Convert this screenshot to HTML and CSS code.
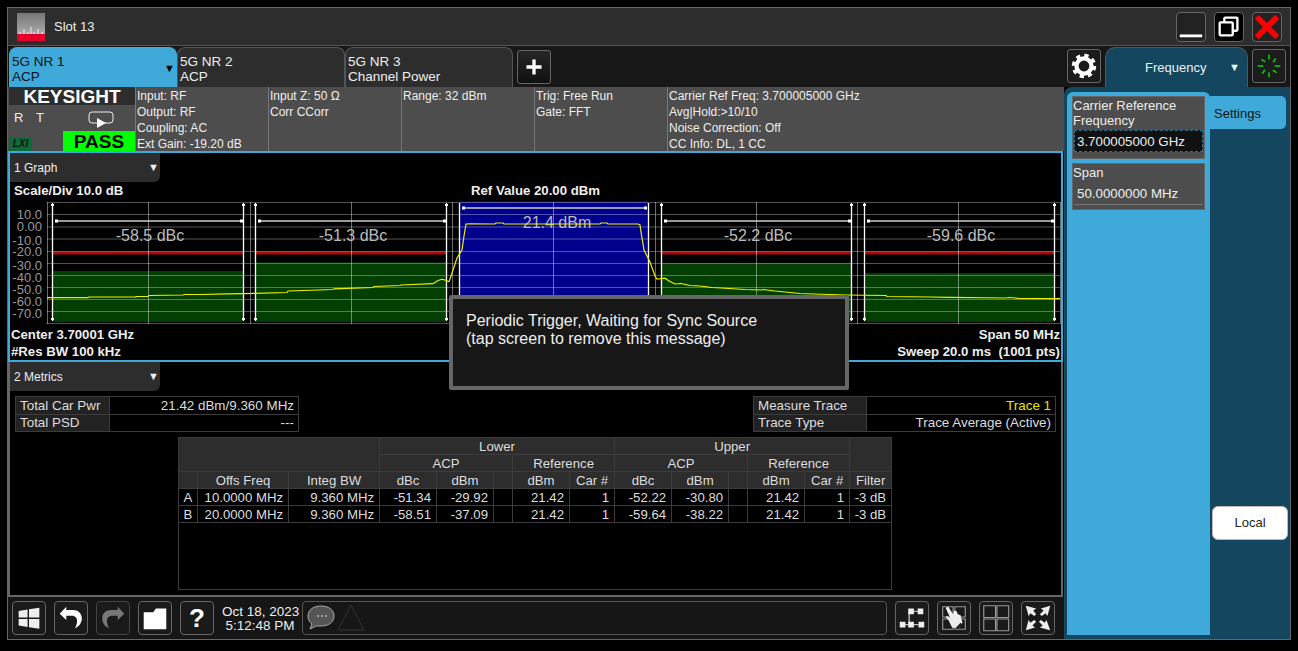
FILE: index.html
```html
<!DOCTYPE html>
<html lang="en">
<head>
    <meta charset="UTF-8">
    <title>Slot 13 - 5G NR ACP</title>
    <link rel="stylesheet" href="styles.css">
</head>
<body>
<div class="window">

    <!-- Title bar -->
    <header class="titlebar">
        <svg class="app-logo" viewBox="0 0 28 28">
            <defs>
                <linearGradient id="logoGrey" x1="0" y1="0" x2="0" y2="1">
                    <stop offset="0" stop-color="#777"/>
                    <stop offset="1" stop-color="#aaa"/>
                </linearGradient>
            </defs>
            <rect width="28" height="21" fill="url(#logoGrey)"/>
            <rect y="21" width="28" height="7" fill="#e4002b"/>
            <path d="M3 21v-2M7 21v-5M11 21v-2M14 21v-7M17 21v-2M21 21v-5M25 21v-2" stroke="#eee" stroke-width="1"/>
        </svg>
        <span class="app-title">Slot 13</span>
        <div class="win-btns">
            <button class="win-btn">
                <svg viewBox="0 0 30 30"><rect x="3" y="23" width="24" height="3" fill="#fff"/></svg>
            </button>
            <button class="win-btn win-btn-dark">
                <svg viewBox="0 0 30 30">
                    <rect x="10" y="5" width="14" height="14" rx="1" fill="none" stroke="#fff" stroke-width="2.5"/>
                    <rect x="5" y="10" width="14" height="14" rx="1" fill="#000" stroke="#fff" stroke-width="2.5"/>
                </svg>
            </button>
            <button class="win-btn">
                <svg viewBox="0 0 30 30"><path d="M4 4 26 26M26 4 4 26" stroke="#f00" stroke-width="6"/></svg>
            </button>
        </div>
    </header>

    <!-- Tabs -->
    <nav class="tabbar">
        <div class="tab tab-active">5G NR 1<br>ACP<span class="tab-arrow">&#9660;</span></div>
        <div class="tab">5G NR 2<br>ACP</div>
        <div class="tab">5G NR 3<br>Channel Power</div>
        <button class="add-btn">
            <svg viewBox="0 0 34 34"><path d="M17 9v16M9 17h16" stroke="#fff" stroke-width="3.5"/></svg>
        </button>
        <button class="gear-btn">
            <svg viewBox="0 0 34 34">
                <circle cx="17" cy="17" r="10.5" fill="none" stroke="#fff" stroke-width="5" stroke-dasharray="4.2 4.05"/>
                <circle cx="17" cy="17" r="8" fill="none" stroke="#fff" stroke-width="4.5"/>
            </svg>
        </button>
        <div class="freq-tab">Frequency<span class="freq-arrow">&#9660;</span></div>
        <button class="spin-btn">
            <svg viewBox="0 0 34 34">
                <path d="M17 5v5M17 24v5M5 17h6M23 17h6M9 10l4 2.500M21 21.500l4 2.500M24 9l-2.500 4M12.500 21l-2.500 4" stroke="#0d0" stroke-width="1.600"/>
            </svg>
        </button>
    </nav>

    <div class="content">
        <div class="main">

            <!-- Instrument status -->
            <section class="status">
                <div class="brand">
                    <div class="brand-name">KEYSIGHT</div>
                    <div class="brand-row">
                        <span class="rt">R</span><span class="rt">T</span>
                        <svg class="run-icon" viewBox="0 0 26 18">
                            <rect x="1" y="1" width="24" height="11" rx="3" fill="none" stroke="#eee" stroke-width="1"/>
                            <path d="M9 7 18 12 9 17z" fill="#fff"/>
                        </svg>
                    </div>
                    <div class="brand-foot">
                        <span class="lxi">LXI</span>
                        <span class="pass">PASS</span>
                    </div>
                </div>
                <div class="status-cell">Input: RF<br>Output: RF<br>Coupling: AC<br>Ext Gain: -19.20 dB</div>
                <div class="status-cell">Input Z: 50 &Omega;<br>Corr CCorr</div>
                <div class="status-cell">Range: 32 dBm</div>
                <div class="status-cell">Trig: Free Run<br>Gate: FFT</div>
                <div class="status-cell status-wide">Carrier Ref Freq: 3.700005000 GHz<br>Avg|Hold:&gt;10/10<br>Noise Correction: Off<br>CC Info: DL, 1 CC</div>
            </section>

            <!-- Graph window -->
            <section class="graph">
                <div class="dropdown">1 Graph<span class="drop-arrow">&#9660;</span></div>
                <div class="graph-head">
                    <span>Scale/Div 10.0 dB</span>
                    <span>Ref Value 20.00 dBm</span>
                    <span></span>
                </div>
                <svg class="plot" viewBox="10 199 1051 127">
                    <!-- channel fills -->
                    <rect x="53" y="271" width="190" height="51" fill="#033f03"/>
                    <rect x="255" y="262.500" width="191" height="59.500" fill="#033f03"/>
                    <rect x="661" y="263" width="190" height="59" fill="#033f03"/>
                    <rect x="864" y="273" width="190" height="49" fill="#033f03"/>
                    <rect x="459" y="201" width="189" height="123" fill="#00008c"/>
                    <!-- limit line -->
                    <path d="M53 253H243M255 253H446M661 253H851M864 253H1054" stroke="#a80a0a" stroke-width="3"/>
                    <!-- graticule -->
                    <path d="M47 202.500H1060M47 214.500H1060M47 227H1060M47 239H1060M47 251.500H1060M47 263.500H1060M47 275.500H1060M47 287.500H1060M47 299.500H1060M47 311.500H1060M47 323.500H1060" stroke="#fff" stroke-opacity=".32" stroke-width="1"/>
                    <path d="M47.500 202V324M148.500 202V324M250.500 202V324M351.500 202V324M452.500 202V324M553.500 202V324M655.500 202V324M756.500 202V324M857.500 202V324M958.500 202V324M1060.500 202V324" stroke="#fff" stroke-opacity=".42" stroke-width="1"/>
                    <!-- y axis -->
                    <g class="y-axis">
                        <text x="42" y="219">10.0</text>
                        <text x="42" y="231">0.00</text>
                        <text x="42" y="245">-10.0</text>
                        <text x="42" y="256">-20.0</text>
                        <text x="42" y="270">-30.0</text>
                        <text x="42" y="282">-40.0</text>
                        <text x="42" y="294">-50.0</text>
                        <text x="42" y="306">-60.0</text>
                        <text x="42" y="318">-70.0</text>
                    </g>
                    <!-- channel markers -->
                    <path d="M52.500 203V321M243.500 203V321M255.500 203V321M446.500 203V321M459.500 203V321M648.500 203V321M661.500 203V321M851.500 203V321M864.500 203V321M1054.500 203V321" stroke="#fff" stroke-width="1.300"/>
                    <path d="M51 204h3v2h-3zM51 318h3v2h-3zM242 204h3v2h-3zM242 318h3v2h-3zM254 204h3v2h-3zM254 318h3v2h-3zM445 204h3v2h-3zM445 318h3v2h-3zM660 204h3v2h-3zM660 318h3v2h-3zM850 204h3v2h-3zM850 318h3v2h-3zM863 204h3v2h-3zM863 318h3v2h-3zM1053 204h3v2h-3zM1053 318h3v2h-3z" fill="#fff"/>
                    <path d="M56 221H241M258 221H444M463 208H646M664 221H849M867 221H1052" stroke="#ccc" stroke-width="1.500"/>
                    <path d="M55 219.500h3v3h-3zM240 219.500h3v3h-3zM258 219.500h3v3h-3zM443 219.500h3v3h-3zM462 206.500h3v3h-3zM644 206.500h3v3h-3zM664 219.500h3v3h-3zM848 219.500h3v3h-3zM867 219.500h3v3h-3zM1051 219.500h3v3h-3z" fill="#fff"/>
                    <!-- band power -->
                    <g class="band-text">
                        <text x="150" y="241">-58.5 dBc</text>
                        <text x="353" y="241">-51.3 dBc</text>
                        <text x="557" y="228">21.4 dBm</text>
                        <text x="758" y="241">-52.2 dBc</text>
                        <text x="961" y="241">-59.6 dBc</text>
                    </g>
                    <!-- trace -->
                    <polyline class="trace" points="47,297.700 88,297.700 89,297 136,297 136,296.500 148,296.500 149,295.500 183,295 184,294.500 200,294.500 228,293.800 243,293.700 287,292.500 288,291 333,289.500 334,288.800 373,287.500 374,286.500 400,285.500 401,285 433,283.700 438,280.500 442,279.300 445,280 449,281.700 452,273 457,258 462,250 464,236 466,224 470,223.800 495,224 496,223 503,223 504,224 600,224 601,223 607,223 608,224 638,224 640,225 641,232 644,250 650,262 655,276 657,279 662,278.500 665,278.200 669,281 675,284 681,283.500 690,285.500 700,286 712,287.500 721,288 745,289.500 761,290 763,289.500 775,291 800,293.500 845,295 886,295.500 887,296.500 930,297 950,297.300 1005,298 1010,297.500 1020,298.500 1060,298.700"/>
                </svg>
                <div class="graph-foot">
                    <span>Center 3.70001 GHz</span>
                    <span>Span 50 MHz</span>
                </div>
                <div class="graph-foot">
                    <span>#Res BW 100 kHz</span>
                    <span>Sweep 20.0 ms &nbsp;(1001 pts)</span>
                </div>
            </section>

            <!-- Metrics window -->
            <section class="metrics">
                <div class="dropdown">2 Metrics<span class="drop-arrow">&#9660;</span></div>
                <div class="summary-row">
                    <table class="summary summary-left">
                        <tr><th>Total Car Pwr</th><td>21.42 dBm/9.360 MHz</td></tr>
                        <tr><th>Total PSD</th><td>---</td></tr>
                    </table>
                    <table class="summary summary-right">
                        <tr><th>Measure Trace</th><td class="yellow">Trace 1</td></tr>
                        <tr><th>Trace Type</th><td>Trace Average (Active)</td></tr>
                    </table>
                </div>
                <table class="acp">
                    <colgroup>
                        <col class="c19"><col class="c91"><col class="c91">
                        <col class="c57"><col class="c57"><col class="c19"><col class="c57"><col class="c45">
                        <col class="c57"><col class="c57"><col class="c19"><col class="c57"><col class="c45">
                        <col class="c42">
                    </colgroup>
                    <thead>
                        <tr>
                            <th colspan="3" rowspan="2"></th>
                            <th colspan="5">Lower</th>
                            <th colspan="5">Upper</th>
                            <th rowspan="2"></th>
                        </tr>
                        <tr>
                            <th colspan="3">ACP</th>
                            <th colspan="2">Reference</th>
                            <th colspan="3">ACP</th>
                            <th colspan="2">Reference</th>
                        </tr>
                        <tr>
                            <th></th><th>Offs Freq</th><th>Integ BW</th>
                            <th>dBc</th><th>dBm</th><th></th><th>dBm</th><th>Car #</th>
                            <th>dBc</th><th>dBm</th><th></th><th>dBm</th><th>Car #</th>
                            <th>Filter</th>
                        </tr>
                    </thead>
                    <tbody>
                        <tr>
                            <td class="mid">A</td><td>10.0000 MHz</td><td>9.360 MHz</td>
                            <td>-51.34</td><td>-29.92</td><td></td><td>21.42</td><td>1</td>
                            <td>-52.22</td><td>-30.80</td><td></td><td>21.42</td><td>1</td>
                            <td>-3 dB</td>
                        </tr>
                        <tr>
                            <td class="mid">B</td><td>20.0000 MHz</td><td>9.360 MHz</td>
                            <td>-58.51</td><td>-37.09</td><td></td><td>21.42</td><td>1</td>
                            <td>-59.64</td><td>-38.22</td><td></td><td>21.42</td><td>1</td>
                            <td>-3 dB</td>
                        </tr>
                        <tr class="acp-empty"><td colspan="14"></td></tr>
                    </tbody>
                </table>
            </section>

            <!-- Bottom toolbar -->
            <footer class="toolbar">
                <button class="tool-btn">
                    <svg viewBox="0 0 34 34"><path d="M6 9.500 15.500 8v8.500H6zM17 7.700 28 6v10.500H17zM6 18h9.500v8.500L6 25zM17 18h11v10.500l-11-1.700z" fill="#eee"/></svg>
                </button>
                <button class="tool-btn">
                    <svg viewBox="0 0 34 34"><path d="M12 5 5 12.500l7 6.500v-4.500h6c3.500 0 5.500 2.500 5.500 5.500 0 3-1 6-2.500 8 5-2 7.500-6.500 7.500-10.500 0-5.500-4-9-9.500-9H12z" fill="#fff"/></svg>
                </button>
                <button class="tool-btn tool-btn-dim">
                    <svg viewBox="0 0 34 34"><path transform="matrix(-1 0 0 1 34 0)" d="M12 5 5 12.500l7 6.500v-4.500h6c3.500 0 5.500 2.500 5.500 5.500 0 3-1 6-2.500 8 5-2 7.500-6.500 7.500-10.500 0-5.500-4-9-9.500-9H12z" fill="#777"/></svg>
                </button>
                <button class="tool-btn">
                    <svg viewBox="0 0 34 34"><path d="M5 11h10l3-4h11v22H5z" fill="#fff"/></svg>
                </button>
                <button class="tool-btn tool-help">?</button>
                <div class="clock">Oct 18, 2023<br>5:12:48 PM</div>
                <div class="msg-box">
                    <svg class="msg-icon" viewBox="0 0 64 32">
                        <path d="M15 4c8 0 13 4 13 10s-5 10-13 10c-2 0-3 0-5 0l-6 3 2-5c-3-2-4-5-4-8C2 8 7 4 15 4z" fill="#555" stroke="#aaa" stroke-width="1"/>
                        <path d="M11 14h2M15 14h2M19 14h2" stroke="#eee" stroke-width="1.200"/>
                        <path d="M45 3 58 28H32z" fill="none" stroke="#333" stroke-width="1"/>
                    </svg>
                </div>
                <button class="tool-btn">
                    <svg viewBox="0 0 34 34">
                        <path d="M23 10H14V24M5 24H29" stroke="#bbb" stroke-width="1.500" fill="none"/>
                        <path d="M13 7h6v6h-6zM23 7h6v6h-6zM4 21h6v6H4zM13 21h6v6h-6zM24 21h6v6h-6z" fill="#eee"/>
                    </svg>
                </button>
                <button class="tool-btn">
                    <svg viewBox="0 0 34 34">
                        <path d="M5 5h11v11H5zM18 5h11v11H18zM5 18h11v11H5zM18 18h11v11H18z" fill="none" stroke="#999" stroke-width="1.200"/>
                        <path d="M8 6l3-1 5 8 1-4 3 1 1 3 3 1 2 8-4 6-7-1-4-8-3-3 2-1 3 2z" fill="#eee"/>
                        <path d="M19 27l5-5 2 2-5 5z" fill="#222"/>
                    </svg>
                </button>
                <button class="tool-btn">
                    <svg viewBox="0 0 34 34">
                        <path d="M4 4h12.500v12.500H4zM18 4h12.500v12.500H18zM4 18h12.500v12.500H4zM18 18h12.500v12.500H18z" fill="none" stroke="#999" stroke-width="1.200"/>
                    </svg>
                </button>
                <button class="tool-btn">
                    <svg viewBox="0 0 34 34">
                        <path d="M4 4l11 3-3 2 3 4-2 2-4-3-2 3zM30 4l-3 11-2-3-4 3-2-2 4-4-3-2zM4 30l3-11 2 3 4-3 2 2-4 4 3 2zM30 30l-11-3 3-2-4-4 2-2 4 3 2-3z" fill="#eee"/>
                    </svg>
                </button>
            </footer>
        </div>

        <!-- Softkey panel -->
        <aside class="panel">
            <div class="softkeys">
                <div class="softkey softkey-tall">
                    <div class="softkey-label">Carrier Reference<br>Frequency</div>
                    <div class="softkey-input">3.700005000 GHz</div>
                </div>
                <div class="softkey">
                    <div class="softkey-label">Span</div>
                    <div class="softkey-value">50.0000000 MHz</div>
                </div>
            </div>
            <div class="side">
                <div class="side-tab">Settings</div>
                <button class="local-btn">Local</button>
            </div>
        </aside>
    </div>

    <!-- Message over the graph -->
    <div class="popup">Periodic Trigger, Waiting for Sync Source<br>(tap screen to remove this message)</div>
</div>
</body>
</html>
```

FILE: styles.css
```css
/* Reset and Basic Styles */
* {
    margin: 0;
    padding: 0;
    box-sizing: border-box;
}
body {
    font-family: "Liberation Sans", Arial, sans-serif;
    background-color: #000;
    color: #eee;
    height: 651px;
    overflow: hidden;
}
button {
    font-family: inherit;
}
svg {
    display: block;
}

.window {
    position: relative;
    display: flex;
    flex-direction: column;
    width: 1284px;
    height: 633px;
    margin: 7px 0 0 7px;
    border: 1px solid #666;
}

/* Title bar */
.titlebar {
    display: flex;
    align-items: center;
    height: 38px;
    padding-left: 9px;
    background-color: #2d2d2d;
    border-bottom: 1px solid #555;
}
.app-logo {
    width: 28px;
    height: 28px;
}
.app-title {
    margin-left: 9px;
    font-size: 13px;
    color: #eee;
}
.win-btns {
    display: flex;
    gap: 8px;
    margin-left: auto;
    margin-right: 8px;
}
.win-btn {
    width: 30px;
    height: 30px;
    background-color: #222;
    border: 1px solid #666;
    border-radius: 4px;
    overflow: hidden;
}
.win-btn-dark {
    background-color: #000;
}

/* Tabs */
.tabbar {
    display: flex;
    align-items: flex-end;
    height: 41px;
    padding-left: 1px;
    background-color: #171717;
}
.tab {
    position: relative;
    width: 168px;
    height: 40px;
    padding: 6px 2px 0;
    font-size: 13.500px;
    line-height: 15px;
    background-color: #2d2d2d;
    border: 1px solid #555;
    border-bottom: none;
    border-radius: 8px 8px 0 0;
    color: #eee;
}
.tab-active {
    background-color: #3fa9da;
    border-color: #3fa9da;
    color: #111;
}
.tab-arrow {
    position: absolute;
    right: 1px;
    top: 13px;
    font-size: 11px;
    color: #000;
}
.add-btn {
    width: 34px;
    height: 34px;
    margin: 0 0 3px 4px;
    background: linear-gradient(#262626, #111);
    border: 1px solid #666;
    border-radius: 3px;
}
.gear-btn {
    width: 34px;
    height: 34px;
    margin: 0 4px 4px auto;
    background-color: #1c1c1c;
    border: 1px solid #666;
    border-radius: 3px;
}
.freq-tab {
    position: relative;
    width: 143px;
    height: 40px;
    padding: 12px 0 0 39px;
    font-size: 13px;
    color: #eee;
    background-color: #14475f;
    border: 1px solid #555;
    border-bottom: none;
    border-radius: 10px 10px 0 0;
}
.freq-arrow {
    position: absolute;
    right: 7px;
    top: 13px;
    font-size: 11px;
    color: #eee;
}
.spin-btn {
    width: 34px;
    height: 34px;
    margin: 0 4px 4px 4px;
    background-color: #1c1c1c;
    border: 1px solid #666;
    border-radius: 3px;
}

.content {
    display: flex;
    flex: 1;
    min-height: 0;
}
.main {
    display: flex;
    flex-direction: column;
    width: 1056px;
}

/* Status row */
.status {
    display: flex;
    flex: none;
    height: 64px;
    background-color: #4d4d4d;
    font-size: 12px;
    line-height: 16px;
    color: #eee;
}
.brand {
    width: 127px;
    background-color: #4d4d4d;
}
.brand-name {
    height: 18px;
    margin-left: 1px;
    margin-bottom: 1px;
    font-size: 19px;
    font-weight: bold;
    line-height: 20px;
    text-align: center;
    color: #fff;
    background-color: #2d2d2d;
}
.brand-row {
    display: flex;
    height: 25px;
    padding: 4px 0 0 6px;
    font-size: 13px;
}
.rt {
    width: 22px;
}
.run-icon {
    width: 26px;
    height: 18px;
    margin: 1px 0 0 30px;
}
.brand-foot {
    display: flex;
    justify-content: space-between;
    align-items: flex-end;
    height: 20px;
    margin-left: 1px;
}
.lxi {
    width: 23px;
    height: 14px;
    font-size: 10px;
    line-height: 14px;
    font-weight: bold;
    font-style: italic;
    text-align: center;
    color: #111;
    background-color: #0d6b3a;
}
.pass {
    width: 72px;
    height: 20px;
    font-size: 19px;
    font-weight: bold;
    line-height: 22px;
    text-align: center;
    color: #000;
    background-color: #00ff00;
}
.status-cell {
    width: 133px;
    padding: 1px 0 0 1px;
    border-left: 1px solid #777;
}
.status-wide {
    flex: 1;
}

/* Graph window */
.graph {
    flex: none;
    height: 211px;
    margin-right: 1px;
    border: 2px solid #3fa9da;
    background-color: #000;
}
.dropdown {
    position: relative;
    width: 150px;
    height: 29px;
    padding: 8px 0 0 4px;
    font-size: 12px;
    color: #eee;
    background-color: #2d2d2d;
    border-radius: 0 0 6px 0;
}
.drop-arrow {
    position: absolute;
    right: 1px;
    top: 8px;
    font-size: 11px;
}
.graph-head {
    display: grid;
    grid-template-columns: 1fr auto 1fr;
    height: 17px;
    padding: 1px 4px 0;
    font-size: 13.200px;
    font-weight: bold;
    line-height: 15px;
    color: #eee;
}
.plot {
    width: 1051px;
    height: 127px;
    background-color: #000;
}
.y-axis text {
    font-size: 13px;
    fill: #999;
    text-anchor: end;
}
.band-text text {
    font-size: 16px;
    fill: #bbb;
    text-anchor: middle;
}
.trace {
    fill: none;
    stroke: #f0f000;
    stroke-width: 1.200;
}
.graph-foot {
    display: flex;
    justify-content: space-between;
    height: 17px;
    padding: 0 1px;
    font-size: 13.200px;
    font-weight: bold;
    line-height: 17px;
    color: #eee;
}

/* Metrics window */
.metrics {
    flex: 1;
    margin-right: 1px;
    background-color: #000;
    border-left: 2px solid #666;
    border-right: 2px solid #666;
    border-bottom: 2px solid #666;
}
.summary-row {
    display: flex;
    justify-content: space-between;
    padding: 5px 5px 0;
}
table {
    border-collapse: collapse;
    table-layout: fixed;
}
.summary {
    font-size: 13.400px;
    color: #ddd;
}
.summary th,
.summary td {
    height: 17.500px;
    padding: 0 4px;
    border: 1px solid #3c3c3c;
    font-weight: normal;
    white-space: nowrap;
}
.summary th {
    text-align: left;
    background-color: #222;
}
.summary td {
    text-align: right;
    background-color: #000;
}
.summary-left {
    width: 284px;
}
.summary-left th {
    width: 94px;
}
.summary-right {
    width: 303px;
}
.summary-right th {
    width: 113px;
}
.yellow {
    color: #e6e600;
}

/* ACP table */
.acp {
    width: 714px;
    margin: 5px 0 0 168px;
    font-size: 13.200px;
    color: #ddd;
}
.c19 { width: 19px; }
.c91 { width: 91px; }
.c57 { width: 57px; }
.c45 { width: 45px; }
.c42 { width: 42px; }
.acp th,
.acp td {
    height: 17px;
    padding: 0 2px;
    border: 1px solid #3c3c3c;
    font-weight: normal;
    white-space: nowrap;
    overflow: hidden;
}
.acp th {
    text-align: center;
    background-color: #2d2d2d;
}
.acp td {
    padding-right: 5px;
    text-align: right;
    background-color: #000;
}
.acp td.mid {
    padding-right: 2px;
    text-align: center;
}
.acp .acp-empty td {
    height: 67px;
}

/* Bottom toolbar */
.toolbar {
    display: flex;
    flex: none;
    align-items: center;
    gap: 8px;
    height: 42px;
    padding-left: 4px;
    background-color: #161616;
}
.tool-btn {
    flex: none;
    width: 34px;
    height: 34px;
    background-color: #1a1a1a;
    border: 1px solid #666;
    border-radius: 4px;
}
.tool-btn-dim {
    border-color: #444;
}
.tool-help {
    font-size: 26px;
    font-weight: bold;
    color: #fff;
}
.clock {
    flex: none;
    width: 76px;
    padding-top: 1px;
    font-size: 13.500px;
    line-height: 14px;
    text-align: center;
    white-space: nowrap;
    color: #eee;
}
.msg-box {
    display: flex;
    flex: none;
    align-items: center;
    width: 585px;
    height: 34px;
    padding-left: 3px;
    margin-left: -4px;
    background-color: #161616;
    border: 1px solid #555;
    border-radius: 4px;
}
.msg-icon {
    width: 64px;
    height: 32px;
}

/* Softkey panel */
.panel {
    display: flex;
    width: 226px;
    padding: 5px 0 4px 3px;
    background-color: #14475f;
    border-radius: 8px 0 0 0;
}
.softkeys {
    width: 143px;
    padding: 4px 5px;
    background-color: #3fa9da;
    border-radius: 6px 6px 0 0;
}
.softkey {
    height: 47px;
    padding-top: 1px;
    background-color: #4d4d4d;
    border: 1px solid #666;
    font-size: 13px;
    line-height: 15px;
    color: #eee;
}
.softkey-tall {
    height: 63px;
    margin-bottom: 4px;
}
.softkey-input {
    height: 22px;
    margin: 2px 1px 0;
    padding: 1px 0 0 2px;
    font-size: 13.300px;
    line-height: 19px;
    color: #eee;
    background-color: #111;
    border: 1px dashed #2f6f96;
}
.softkey-value {
    height: 22px;
    margin: 3px 1px 0;
    padding: 1px 0 0 3px;
    font-size: 13.300px;
    line-height: 20px;
    border-bottom: 1px solid #777;
}
.side {
    flex: 1;
    padding-top: 4px;
}
.side-tab {
    width: 76px;
    height: 33px;
    padding-left: 4px;
    font-size: 13px;
    line-height: 35px;
    color: #111;
    background-color: #3fa9da;
    border-radius: 0 5px 5px 0;
}
.local-btn {
    display: block;
    width: 76px;
    height: 34px;
    margin: 377px 0 0 2px;
    padding-bottom: 2px;
    font-size: 13px;
    color: #222;
    background-color: #fff;
    border: 1px solid #bbb;
    border-radius: 6px;
}

/* Message over the graph */
.popup {
    position: absolute;
    left: 441px;
    top: 287px;
    width: 400px;
    height: 95px;
    padding: 13px 13px;
    font-size: 16px;
    line-height: 18px;
    color: #eee;
    background-color: #171717;
    border: 4px solid #666;
    border-radius: 2px;
}
```
